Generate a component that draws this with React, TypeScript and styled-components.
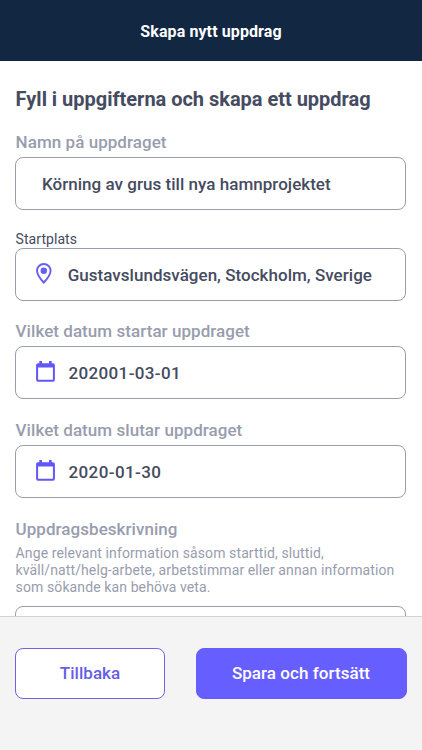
import React from "react";
import styled, { createGlobalStyle } from "styled-components";

const Global = createGlobalStyle`
  * { box-sizing: border-box; }
  body { margin: 0; font-family: Roboto, sans-serif; background: #fff; overflow: hidden; }
`;
const Screen = styled.div`
  height: 750px; width: 422px; display: flex; flex-direction: column; overflow: hidden; color: #454b60;
`;
const Header = styled.header`
  flex: 0 0 61px; background: #112742; color: #fff; display: flex; align-items: center; justify-content: center;
  font-size: 16px; font-weight: 700; letter-spacing: 0.1px; padding-top: 1px;
`;
const Form = styled.main`
  flex: 1 1 0; min-height: 0; overflow: hidden; padding: 24px 16px 0 15px; display: flex; flex-direction: column;
`;
const Title = styled.h1`
  margin: 0 0 17px; padding-left: 0.6px; font-size: 20px; line-height: 28px; font-weight: 700; flex: none;
  letter-spacing: -0.02px;
`;
const Label = styled.label<{ $small?: boolean }>`
  flex: none;
  padding-left: 0.6px;
  margin-bottom: ${(p) => (p.$small ? 0 : 2)}px;
  font-size: ${(p) => (p.$small ? 14 : 17)}px;
  line-height: ${(p) => (p.$small ? 18 : 25)}px;
  font-weight: ${(p) => (p.$small ? 400 : 500)};
  letter-spacing: 0.05px;
  color: ${(p) => (p.$small ? "#454b60" : "#989dae")};
`;
const Field = styled.div<{ $gap: number; $indent: number; $spacing?: number }>`
  flex: none; height: 53px; border: 1px solid #9a9dad; border-radius: 8px; margin-bottom: ${(p) => p.$gap}px;
  padding-left: ${(p) => p.$indent}px; display: flex; align-items: center; font-size: 17px; font-weight: 500;
  letter-spacing: ${(p) => p.$spacing ?? 0.03}px;
`;
const IconSlot = styled.span<{ $width: number }>`
  width: ${(p) => p.$width}px; display: flex; flex: none; padding-bottom: 2px;
`;
const Hint = styled.p`
  margin: 0 0 9.5px; padding: 0.5px 0 0 0.6px; font-size: 14px; line-height: 17.333px; letter-spacing: 0.108px;
  color: #989dae; flex: none; white-space: nowrap;
`;
const Footer = styled.footer`
  flex: 0 0 134px; background: #f4f4f4; border-top: 1px solid #d3d3d5; padding: 31px 15.500px 0 15px; display: flex;
  justify-content: space-between; align-items: flex-start;
`;
const Button = styled.button<{ $primary?: boolean }>`
  height: 51px; width: ${(p) => (p.$primary ? 211 : 150)}px; border: 1px solid ${(p) => (p.$primary ? "#665eff" : "#7065e0")};
  border-radius: 8px;
  background: ${(p) => (p.$primary ? "#665eff" : "#fff")}; color: ${(p) => (p.$primary ? "#fff" : "#665ee6")};
  font: 500 17px Roboto, sans-serif; letter-spacing: 0.05px; padding: 0 0 1px;
`;

const Pin = () => (
  <svg width="16" height="21" viewBox="0 0 16 21" fill="none" stroke="#665eec" strokeWidth="1.9">
    <path d="M7.800 1C4 1 1 4 1 7.700c0 4.500 6.800 11.800 6.800 11.800s6.800-7.300 6.800-11.800C14.600 4 11.600 1 7.800 1Z" />
    <circle cx="7.800" cy="7.700" r="3.200" fill="#665eec" stroke="none" />
  </svg>
);
const Calendar = () => (
  <svg width="19" height="21" viewBox="0 0 19 21">
    <path fill="#6256fa" fillRule="evenodd" d="M3.300 0h2.700v2.200h7V0h2.700v2.200H17a1.900 1.900 0 0 1 1.900 1.900v14.700a1.900 1.900 0 0 1-1.900 1.900H2A1.900 1.900 0 0 1 .1 18.800V4.100A1.900 1.900 0 0 1 2 2.200h1.300ZM2.100 6.600v12.100h14.800V6.600Z" />
  </svg>
);

export default function App() {
  return (
    <Screen>
      <Global />
      <Header>Skapa nytt uppdrag</Header>
      <Form>
        <Title>Fyll i uppgifterna och skapa ett uppdrag</Title>
        <Label>Namn på uppdraget</Label>
        <Field $gap={20} $indent={26}>Körning av grus till nya hamnprojektet</Field>
        <Label $small>Startplats</Label>
        <Field $gap={18} $indent={19.7}><IconSlot $width={32}><Pin /></IconSlot>Gustavslundsvägen, Stockholm, Sverige</Field>
        <Label>Vilket datum startar uppdraget</Label>
        <Field $gap={19} $indent={19.5} $spacing={0.36}><IconSlot $width={33}><Calendar /></IconSlot>202001-03-01</Field>
        <Label>Vilket datum slutar uppdraget</Label>
        <Field $gap={19} $indent={19.5} $spacing={0.4}><IconSlot $width={33}><Calendar /></IconSlot>2020-01-30</Field>
        <Label>Uppdragsbeskrivning</Label>
        <Hint>Ange relevant information såsom starttid, sluttid,<br />kväll/natt/helg-arbete, arbetstimmar eller annan information<br />som sökande kan behöva veta.</Hint>
        <Field $gap={0} $indent={20} />
      </Form>
      <Footer><Button>Tillbaka</Button><Button $primary>Spara och fortsätt</Button></Footer>
    </Screen>
  );
}
